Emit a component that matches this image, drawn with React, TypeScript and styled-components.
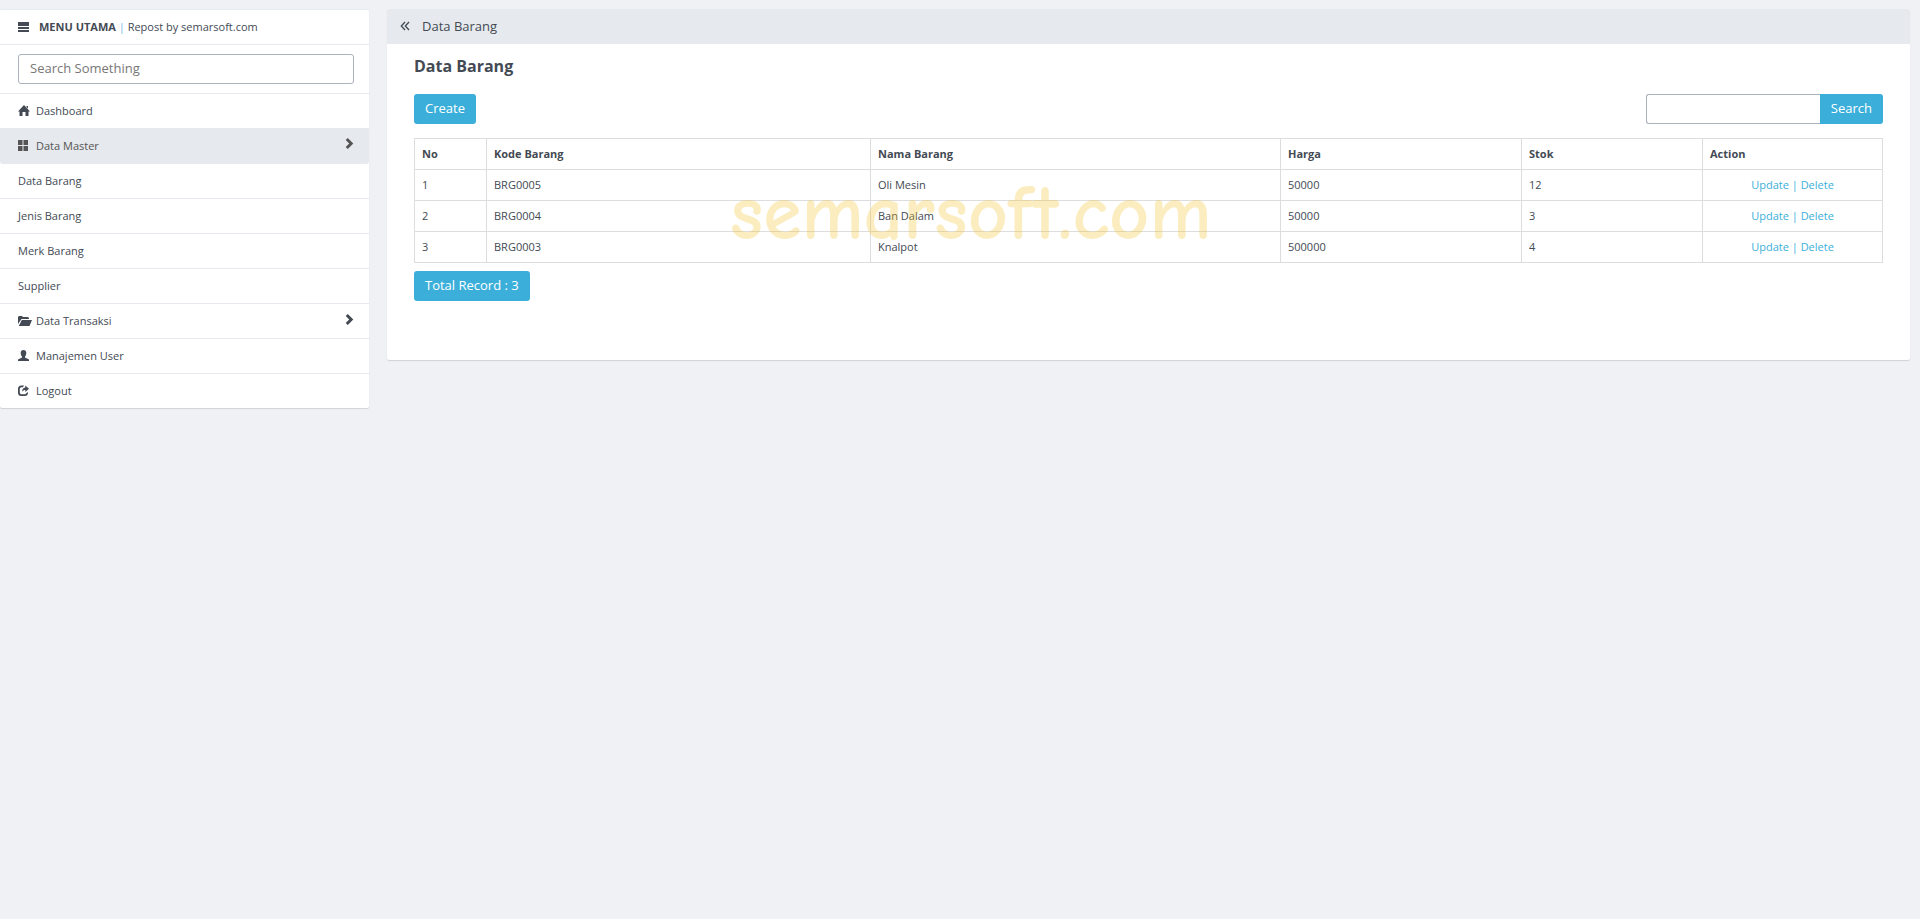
import React from "react";
import styled, { createGlobalStyle, css } from "styled-components";

const GlobalStyle = createGlobalStyle`
  *, *::before, *::after { box-sizing: border-box; }
  body {
    margin: 0;
    background: #f0f1f5;
    color: #434a54;
    font-family: "Open Sans", "Noto Sans", sans-serif;
    font-size: 11px;
    line-height: 16px;
  }
  a { color: inherit; text-decoration: none; }
  input, button { font: inherit; }
`;

const Page = styled.div`
  display: grid;
  grid-template-columns: minmax(0, 369px) minmax(0, 1fr);
  align-items: start;
  gap: 18px;
  padding: 9px 10px 9px 0;
`;

const card = css`
  background: #fff;
  border-radius: 2px;
  box-shadow: 0 1px 1px rgba(0, 0, 0, 0.13);
`;

const Sidebar = styled.nav`
  ${card}
  border-top: 1px solid #e6e9ee;
`;

const MenuHeader = styled.div`
  display: flex;
  align-items: center;
  gap: 7px;
  height: 35px;
  padding: 0 18px;
  border-bottom: 1px solid #e6e9ee;
`;

const Divider = styled.span`
  color: #6fb9e6;
`;

const SearchRow = styled.div`
  padding: 9px 15px 9px 18px;
  border-bottom: 1px solid #e6e9ee;
`;

const TextInput = styled.input<{ $joined?: boolean }>`
  display: block;
  width: ${(p) => (p.$joined ? "174px" : "100%")};
  height: 30px;
  padding: 0 11px 2px;
  border: 1px solid #aab2bd;
  border-radius: ${(p) => (p.$joined ? "3px 0 0 3px" : "3px")};
  border-right-width: ${(p) => (p.$joined ? "0" : "1px")};
  background: #fff;
  color: #434a54;
  font-size: 13px;
  outline: none;
  &::placeholder { color: #777; opacity: 1; }
`;

const MenuList = styled.ul`
  margin: 0;
  padding: 0;
  list-style: none;
`;

const MenuLink = styled.a<{ $active?: boolean }>`
  display: flex;
  align-items: center;
  height: 35px;
  padding: 0 15px 0 18px;
  border-bottom: 1px solid #e6e9ee;
  ${(p) =>
    p.$active &&
    css`
      height: 36px;
      margin-top: -1px;
      background: #e6e9ed;
      border-radius: 3px;
      color: #555;
    `}
  li:last-child > & {
    height: 34px;
    border-bottom: 0;
  }
`;

const IconSlot = styled.span`
  display: flex;
  width: 18px;
`;

const Icon = styled.svg`
  display: block;
  width: 14px;
  height: 12px;
  fill: currentColor;
  flex: none;
`;

const Arrow = styled(Icon)`
  width: 9px;
  margin: 0 0 3px auto;
`;

const BackIcon = styled(Icon)`
  width: 10px;
  height: 10px;
`;

const Panel = styled.main`
  ${card}
`;

const TopBar = styled.header`
  display: flex;
  align-items: center;
  gap: 12px;
  height: 35px;
  padding: 0 13px 1px;
  background: #e6e9ed;
  border-radius: 2px 2px 0 0;
  font-size: 13px;
`;

const Back = styled.button`
  padding: 0;
  border: 0;
  background: none;
  color: inherit;
`;

const Body = styled.div`
  padding: 11px 27px 59px;
`;

const Title = styled.h1`
  margin: 0;
  font-size: 16px;
  line-height: 22px;
  font-weight: 700;
`;

const Toolbar = styled.div`
  display: flex;
  justify-content: space-between;
  margin: 17px 0 14px;
`;

const SearchForm = styled.form`
  display: flex;
`;

const Button = styled.button<{ $joined?: boolean }>`
  display: block;
  height: 30px;
  padding: 0 11px 2px;
  border: 0;
  border-radius: ${(p) => (p.$joined ? "0 3px 3px 0" : "3px")};
  background: #3bafda;
  color: #fff;
  font-size: 13px;
`;

const TableArea = styled.div`
  position: relative;
  margin-bottom: 8px;
`;

const Table = styled.table`
  width: 100%;
  table-layout: fixed;
  border-collapse: collapse;
`;

const cell = css`
  padding: 7px;
  border: 1px solid #ddd;
  text-align: left;
`;

const HeadCell = styled.th<{ $width: number }>`
  ${cell}
  width: ${(p) => p.$width}px;
  font-weight: 700;
`;

const Cell = styled.td`
  ${cell}
`;

const ActionCell = styled(Cell)`
  color: #3bafda;
  text-align: center;
`;

const Watermark = styled.div`
  position: absolute;
  top: 36px;
  left: 316px;
  color: #f2c62f;
  font-family: "Comic Sans MS", "Comic Neue", "Noto Sans", sans-serif;
  font-size: 78px;
  line-height: 80px;
  font-weight: 700;
  opacity: 0.3;
  pointer-events: none;
`;

const icons = {
  list: "M0 1h11v4H0zM0 6h11v2H0zM0 9h11v2H0z",
  home: "M6 0l6 6.500h-1.500V11H7.500V7h-3v4H1.500V6.500H0zM8.500 1h1.500v2.500l-1.500-1.500z",
  grid: "M0 0h4.500v5H0zM5.500 0H10v5H5.500zM0 6h4.500v5H0zM5.500 6H10v5H5.500z",
  folder: "M0 9V2l1-1h3l1 1h5l1 1v1H3.500zM3.800 5H14l-2.500 6H.8z",
  user: "M5.500 0C7.300 0 8.300 1.200 8.300 3c0 1.600-.6 2.800-1.300 3.500v1L11 9.500V11H0V9.500l4-2v-1C3.300 5.800 2.700 4.600 2.700 3 2.700 1.200 3.700 0 5.500 0z",
  logout: "M6 .500H3.500A3.500 3.500 0 0 0 0 4V7.500A3.500 3.500 0 0 0 3.500 11H6.500A3.500 3.500 0 0 0 10 7.500V7L8.200 8.200A1.700 1.700 0 0 1 6.500 9.200H3.500A1.700 1.700 0 0 1 1.800 7.500V4A1.700 1.700 0 0 1 3.500 2.300H5zM7.300 .500L11 3.800 7.300 7V5C5.800 5 5 5.500 4.200 6.800 4 4.200 5.300 2.700 7.300 2.500z",
  chevron: "M2.800 0L8.300 5.500 2.800 11 .700 9l3.500-3.500L.700 2z",
};

const Glyph = ({ name }: { name: keyof typeof icons }) => (
  <Icon viewBox="0 0 14 12" aria-hidden="true"><path d={icons[name]} /></Icon>
);

type MenuEntry = { label: string; icon?: keyof typeof icons; arrow?: boolean; active?: boolean };

const menu: MenuEntry[] = [
  { label: "Dashboard", icon: "home" },
  { label: "Data Master", icon: "grid", arrow: true, active: true },
  { label: "Data Barang" },
  { label: "Jenis Barang" },
  { label: "Merk Barang" },
  { label: "Supplier" },
  { label: "Data Transaksi", icon: "folder", arrow: true },
  { label: "Manajemen User", icon: "user" },
  { label: "Logout", icon: "logout" },
];

const columns = [
  { label: "No", width: 72 },
  { label: "Kode Barang", width: 384 },
  { label: "Nama Barang", width: 410 },
  { label: "Harga", width: 241 },
  { label: "Stok", width: 181 },
  { label: "Action", width: 180 },
];

const items = [
  ["1", "BRG0005", "Oli Mesin", "50000", "12"],
  ["2", "BRG0004", "Ban Dalam", "50000", "3"],
  ["3", "BRG0003", "Knalpot", "500000", "4"],
];

export default function App() {
  return (
    <>
      <GlobalStyle />
      <Page>
        <Sidebar>
          <MenuHeader>
            <Glyph name="list" />
            <span><b>MENU UTAMA</b> <Divider>|</Divider> Repost by semarsoft.com</span>
          </MenuHeader>
          <SearchRow>
            <TextInput type="text" placeholder="Search Something" aria-label="Search Something" />
          </SearchRow>
          <MenuList>
            {menu.map((m) => (
              <li key={m.label}>
                <MenuLink href="#" $active={m.active}>
                  {m.icon && <IconSlot><Glyph name={m.icon} /></IconSlot>}
                  {m.label}
                  {m.arrow && <Arrow viewBox="0 0 9 12" aria-hidden="true"><path d={icons.chevron} /></Arrow>}
                </MenuLink>
              </li>
            ))}
          </MenuList>
        </Sidebar>
        <Panel>
          <TopBar>
            <Back type="button" aria-label="Back">
              <BackIcon viewBox="0 0 10 10" aria-hidden="true">
                <path d="M5 1L1.300 5 5 9M9 1L5.300 5 9 9" fill="none" stroke="currentColor" strokeWidth="1.300" />
              </BackIcon>
            </Back>
            Data Barang
          </TopBar>
          <Body>
            <Title>Data Barang</Title>
            <Toolbar>
              <Button type="button">Create</Button>
              <SearchForm>
                <TextInput $joined type="text" aria-label="Search" />
                <Button $joined type="button">Search</Button>
              </SearchForm>
            </Toolbar>
            <TableArea>
              <Table>
                <thead>
                  <tr>{columns.map((c) => <HeadCell key={c.label} $width={c.width}>{c.label}</HeadCell>)}</tr>
                </thead>
                <tbody>
                  {items.map((row) => (
                    <tr key={row[0]}>
                      {row.map((value, i) => <Cell key={i}>{value}</Cell>)}
                      <ActionCell><a href="#">Update</a> | <a href="#">Delete</a></ActionCell>
                    </tr>
                  ))}
                </tbody>
              </Table>
              <Watermark>semarsoft.com</Watermark>
            </TableArea>
            <Button type="button">Total Record : 3</Button>
          </Body>
        </Panel>
      </Page>
    </>
  );
}
